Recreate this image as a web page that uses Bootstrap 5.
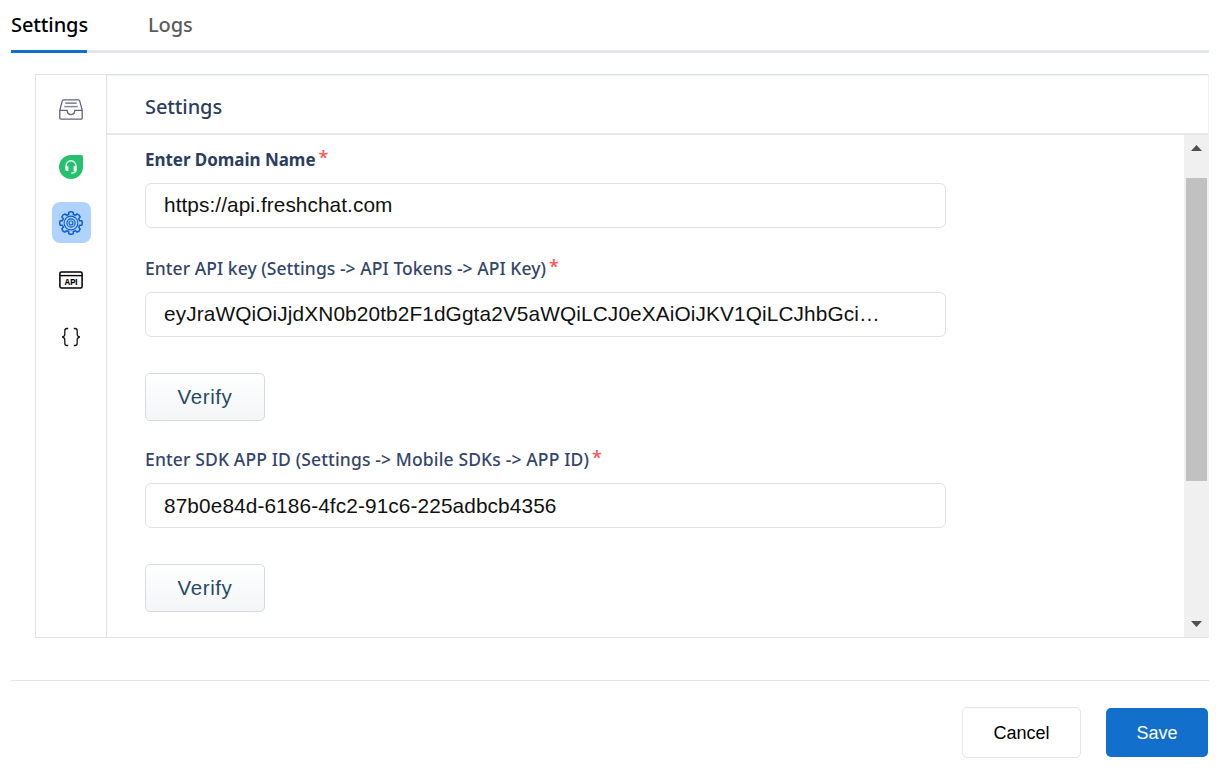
<!DOCTYPE html>
<html lang="en">
<head>
<meta charset="utf-8">
<meta name="viewport" content="width=device-width, initial-scale=1">
<title>Settings</title>
<link href="https://cdn.jsdelivr.net/npm/bootstrap@5.3.0/dist/css/bootstrap.min.css" rel="stylesheet">
<style>
body{font-family:"Noto Sans","Open Sans",sans-serif;color:#2c3e5d;height:770px;overflow:hidden;background:#fff}
.app-page{padding:0 13px 0 11px}
.app-tabs{height:53px;box-shadow:inset 0 -3px #e3e6ed;gap:61px;font-size:20px;font-weight:500}
.app-tabs .nav-link{padding:0;height:53px;line-height:49px;color:#5c5c5c;border-bottom:3px solid transparent;white-space:nowrap}
.app-tabs .nav-link.active{color:#000;border-bottom-color:#126fcc;width:76px}
.tw{display:inline-block;white-space:nowrap}
.panel{margin:21px 0 0 24px;height:564px;border:1px solid #e0e4ea;border-right-color:#eef0f4}
.side{width:71px;border-right:1px solid #dfe2e8;padding-top:13px;gap:16px}
.tile{width:39px;height:41px;border-radius:8px;padding:0;border:0;background:transparent}
.tile.active{background:#b0d2ff}
.tile.low{padding-top:2px}
.panel-title{height:60px;border-bottom:2px solid #e5e8ed;padding-left:38px;font-size:20px;font-weight:500;line-height:61px;border-top:1px solid #eff1f4}
.form-area{padding:12px 0 0 38px}
.field-label{height:24px;line-height:25px;font-size:17.5px;font-weight:500;margin:0 0 12px;white-space:nowrap;display:block;color:#34466a}
.field-label.strong{font-weight:700;color:#2c3e5d;font-size:17px}
.field-gap{margin-top:28px}
.field-gap-sm{margin-top:26px}
.req{display:inline-block;color:#ff5454;font-family:"Open Sans",sans-serif;font-size:18px;font-weight:600;line-height:20px;margin-left:3px;transform:translateY(-2px)}
.text-box{width:801px;height:45px;border:1px solid #dfe1e6;border-radius:6px;padding:0 18px;font:20.8px/43px "Liberation Sans",Arial,sans-serif;color:#111;box-shadow:none}
.text-box.raised{line-height:41px}
.verify{width:120px;height:48px;margin-top:36px;border:1px solid #d5dbe1;border-radius:5px;background:linear-gradient(#fff,#f3f5f7);font:20.5px/46px "Liberation Sans",Arial,sans-serif;color:#264966;padding:0;display:block}
.scroller{width:25px;background:#f0f0f0;padding:10px 0 10px;margin-right:-1px}
.thumb{width:21px;height:303px;background:#c1c1c1;margin-top:27px}
.foot{margin-top:42px;border-top:1px solid #e3e4e6;padding:26px 1px 0 0;gap:25px}
.foot .btn{font:18px/1 "Liberation Sans",Arial,sans-serif;border-radius:5px;padding:0}
.btn-cancel{width:119px;height:51px;border:1px solid #e4e5e7;color:#000;background:#fff}
.btn-save{width:102px;height:49px;background:#126fcc;color:#fff;border:0}
</style>
</head>
<body>
<div class="app-page">
  <nav class="nav app-tabs flex-nowrap">
    <a class="nav-link active" href="#"><span class="tw t1">Settings</span></a>
    <a class="nav-link" href="#"><span class="tw t2">Logs</span></a>
  </nav>
  <main class="panel d-flex">
    <aside class="side d-flex flex-column align-items-center flex-shrink-0">
      <button class="tile low d-flex align-items-center justify-content-center" aria-label="Inbox">
        <svg width="24" height="21" viewBox="0 0 24 21" fill="none" stroke="#62667f" stroke-width="1.3"><path d="M.8 11.4 3.3 1.9Q3.6.8 4.7.8H19.3Q20.4.8 20.7 1.9L23.2 11.4V19Q23.2 20.2 22 20.2H2Q.8 20.2.8 19V11.4H8.2C8.5 17 15.5 17 15.8 11.4H23.2"/><path d="M6.3 4.1H17.7"/><path d="M5.2 7.6H18.8" stroke="#8a8da2" stroke-width="1.6"/></svg>
      </button>
      <button class="tile low d-flex align-items-center justify-content-center" aria-label="Support">
        <svg width="24" height="24" viewBox="0 0 24 24"><path d="M12 0H22Q24 0 24 2V12A12 12 0 1 1 12 0Z" fill="#25c16f"/><path d="M7.1 12V10.7A4.9 4.9 0 0 1 16.9 10.7V15.2Q16.9 17.5 13.8 17.8" fill="none" stroke="#e8f9ef" stroke-width="1.4"/><path d="M6.3 11.2H9.4V16H7.8Q6.3 16 6.3 14.2ZM14.6 11.2H17.7V14.2Q17.7 16 16.2 16H14.6Z" fill="#fff"/><path d="M12.2 17.4H14.4V18.5H12.2Z" fill="#fff"/></svg>
      </button>
      <button class="tile active d-flex align-items-center justify-content-center" aria-label="Settings">
        <svg width="25" height="25" viewBox="0 0 25 25" fill="none" stroke="#0c5fca" stroke-width="1.5"><path id="cog"/><circle cx="12" cy="13" r="6.9" stroke-width="1.1"/><circle cx="12" cy="13" r="4.1" stroke-width="1.2"/><circle cx="12" cy="13" r="2" stroke-width="1.1"/></svg>
      </button>
      <button class="tile d-flex align-items-center justify-content-center" aria-label="API">
        <svg width="24" height="18" viewBox="0 0 24 18"><rect x=".9" y=".9" width="22.2" height="16" rx="1.5" fill="none" stroke="#000" stroke-width="1.5"/><path d="M1 4.6H23" stroke="#000" stroke-width="1.4"/><text x="12" y="13.8" text-anchor="middle" textLength="13" lengthAdjust="spacingAndGlyphs" font-family="Liberation Sans" font-weight="700" font-size="8.5" stroke="#000" stroke-width=".2">API</text></svg>
      </button>
      <button class="tile d-flex align-items-center justify-content-center" aria-label="Code">
        <svg width="20" height="20" viewBox="0 0 20 20" fill="none" stroke="#151515" stroke-width="1.3"><path d="M7.2 1.5H6Q3.8 1.5 3.8 3.7V7.2Q3.8 9.5 1.2 10Q3.8 10.5 3.8 12.8V16.3Q3.8 18.5 6 18.5H7.2M12.8 1.5H14Q16.2 1.5 16.2 3.7V7.2Q16.2 9.5 18.8 10Q16.2 10.5 16.2 12.8V16.3Q16.2 18.5 14 18.5H12.8"/></svg>
      </button>
    </aside>
    <section class="flex-grow-1 d-flex flex-column">
      <div class="panel-title"><span class="tw t3">Settings</span></div>
      <div class="d-flex flex-grow-1">
        <form class="form-area flex-grow-1">
          <label class="field-label strong"><span class="tw t4">Enter Domain Name</span><span class="req">*</span></label>
          <div class="form-control text-box raised"><span class="tw t5">https://api.freshchat.com</span></div>
          <label class="field-label field-gap"><span class="tw t6">Enter API key (Settings -&gt; API Tokens -&gt; API Key)</span><span class="req">*</span></label>
          <div class="form-control text-box raised"><span class="tw t7">eyJraWQiOiJjdXN0b20tb2F1dGgta2V5aWQiLCJ0eXAiOiJKV1QiLCJhbGci…</span></div>
          <button type="button" class="btn verify"><span class="tw t8">Verify</span></button>
          <label class="field-label field-gap-sm"><span class="tw t9">Enter SDK APP ID (Settings -&gt; Mobile SDKs -&gt; APP ID)</span><span class="req">*</span></label>
          <div class="form-control text-box"><span class="tw t10">87b0e84d-6186-4fc2-91c6-225adbcb4356</span></div>
          <button type="button" class="btn verify"><span class="tw t8">Verify</span></button>
        </form>
        <div class="scroller d-flex flex-column align-items-center">
          <svg width="11" height="6"><path d="M5.5 0 11 6H0Z" fill="#505050"/></svg>
          <div class="thumb"></div>
          <svg class="mt-auto" width="11" height="6"><path d="M0 0H11L5.5 6Z" fill="#505050"/></svg>
        </div>
      </div>
    </section>
  </main>
  <footer class="foot d-flex justify-content-end align-items-center">
    <button class="btn btn-cancel"><span class="tw t11">Cancel</span></button>
    <button class="btn btn-save"><span class="tw t12">Save</span></button>
  </footer>
</div>
<script src="https://cdn.jsdelivr.net/npm/bootstrap@5.3.0/dist/js/bootstrap.bundle.min.js"></script>
<script>
// Eight rounded teeth around the cog's centre
let d='';
for(let i=0;i<8;i++){
  const p=(r,a)=>{const t=(i*45+a-90)*Math.PI/180;return (12+r*Math.cos(t)).toFixed(2)+' '+(13+r*Math.sin(t)).toFixed(2)};
  d+=(i?'L':'M')+p(8.9,-15)+'L'+p(10.9,-12)+'Q'+p(11.9,0)+' '+p(10.9,12)+'L'+p(8.9,15);
}
document.getElementById('cog').setAttribute('d',d+'Z');
// Fit each text run to its designed width by tracking
const widths={t1:77,t2:44.5,t3:77,t4:170.5,t5:228.5,t6:401,t7:716,t8:55,t9:444,t10:392.5,t11:56,t12:41};
for(const k in widths)document.querySelectorAll('.'+k).forEach(e=>{
  const n=e.textContent.length;
  const s=(widths[k]-e.getBoundingClientRect().width)/n;
  e.style.letterSpacing=s.toFixed(3)+'px';
});
</script>
</body>
</html>
